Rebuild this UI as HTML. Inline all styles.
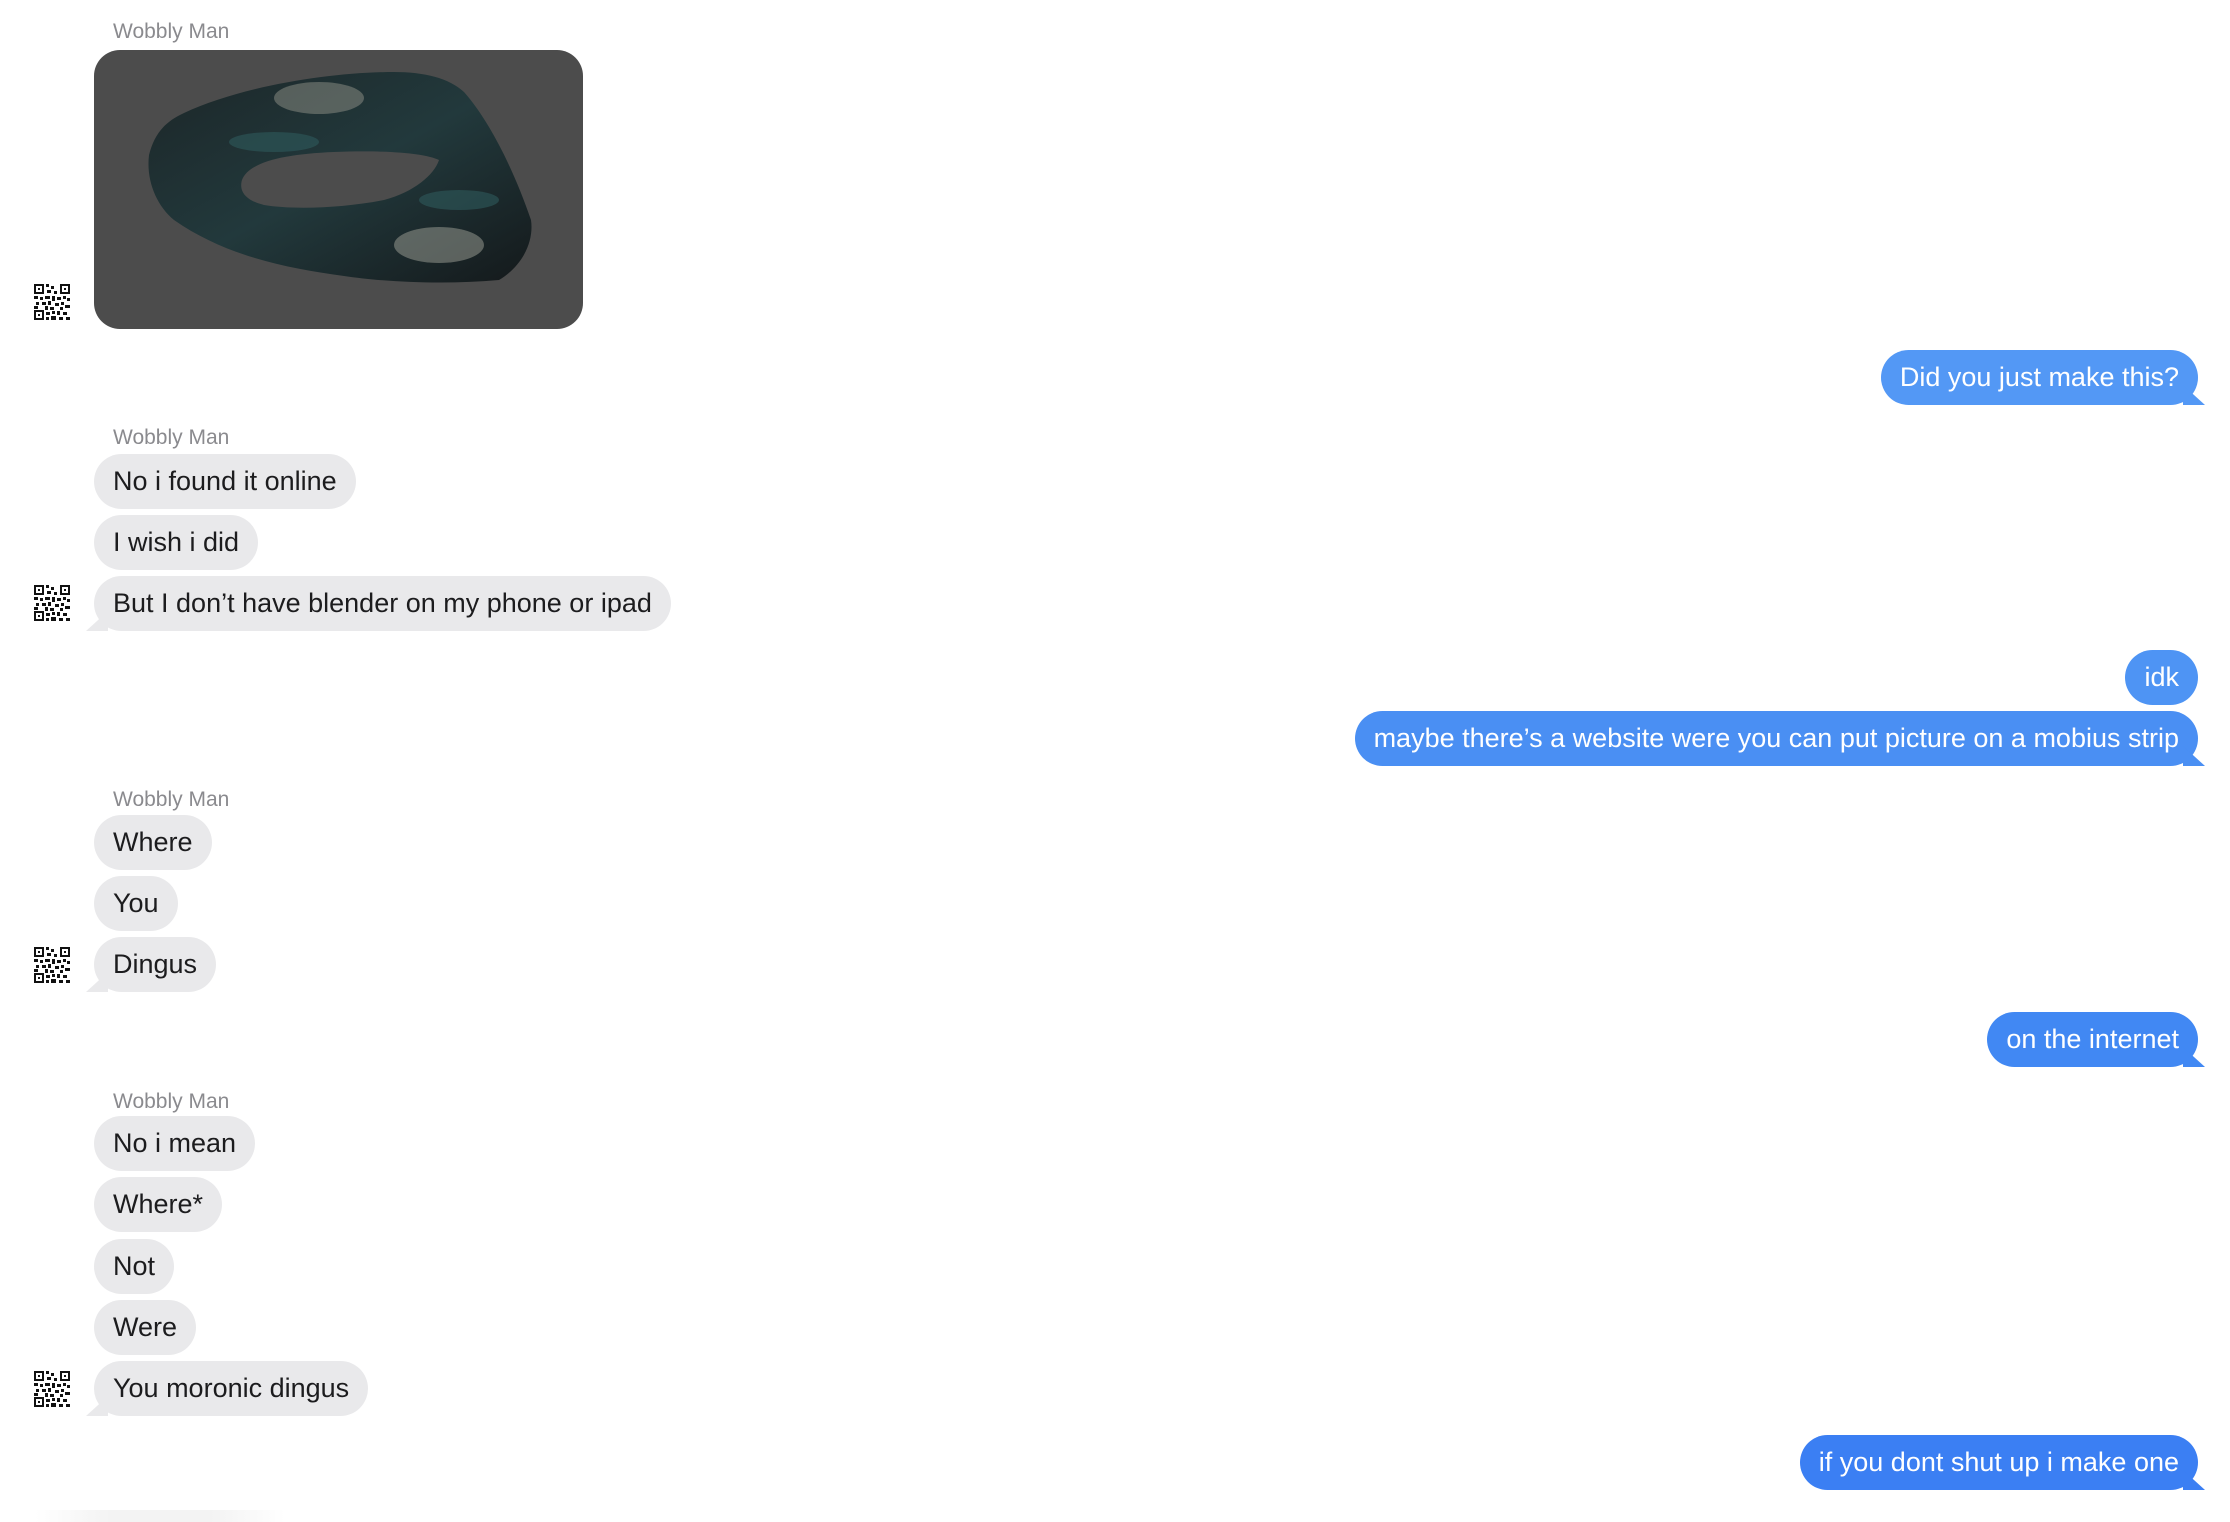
<!DOCTYPE html>
<html><head><meta charset="utf-8"><style>
html,body{margin:0;padding:0;background:#fff;width:2230px;height:1522px;overflow:hidden;position:relative;font-family:"Liberation Sans",Arial,sans-serif}
.n{position:absolute;left:113px;font-size:21px;color:#8a8a8e}
.g,.b{position:absolute;height:55px;line-height:55px;border-radius:28px;font-size:27px;padding:0 19px;white-space:nowrap;box-sizing:border-box}
.g{left:94px;background:#e9e9eb;color:#1c1c1e}
.b{right:32px;color:#fff}
.tl::before{content:"";position:absolute;left:-8px;bottom:0;width:22px;height:20px;background:#e9e9eb;clip-path:polygon(0 100%,100% 0,100% 100%)}
.tr::after{content:"";position:absolute;right:-7px;bottom:0;width:22px;height:20px;background:inherit;clip-path:polygon(100% 100%,0 0,0 100%)}
.av{position:absolute;left:33px;width:38px;height:38px}
</style></head><body>
<svg width="0" height="0" style="position:absolute"><defs><g id="qr">
<rect x="0" y="0" width="38" height="38" fill="#fff"/>
<path d="M1 1h10v10H1zM3 3v6h6V3zM27 1h10v10H27zM29 3v6h6V3zM1 27h10v10H1zM3 29v6h6v-6z" fill="#111" fill-rule="evenodd"/>
<rect x="5" y="5" width="2" height="2" fill="#111"/><rect x="31" y="5" width="2" height="2" fill="#111"/><rect x="5" y="31" width="2" height="2" fill="#111"/>
<path d="M13 1h3v3h-3zM18 3h3v3h-3zM14 7h4v3h-4zM21 8h3v3h-3zM1 13h4v3H1zM7 14h3v3H7zM12 13h5v3h-5zM19 13h3v5h-3zM24 14h4v3h-4zM30 13h3v3h-3zM34 15h3v3h-3zM3 19h3v3H3zM9 19h4v3H9zM15 18h3v4h-3zM22 20h4v3h-4zM28 19h3v3h-3zM1 23h4v3H1zM12 23h3v4h-3zM17 24h4v3h-4zM27 24h3v3h-3zM32 22h5v3h-5zM13 29h4v3h-4zM19 28h3v3h-3zM24 28h3v4h-3zM30 29h4v3h-4zM13 34h3v3h-3zM18 33h5v4h-5zM26 34h4v3h-4zM33 34h4v3h-4z" fill="#111"/>
</g></defs></svg>

<div class="n" style="top:20px">Wobbly Man</div>
<div style="position:absolute;left:94px;top:50px;width:489px;height:279px;border-radius:26px;background:#4c4c4c;overflow:hidden">
<svg width="489" height="279" viewBox="0 0 489 279">
<defs><linearGradient id="lg" x1="0" y1="0" x2="1" y2="1"><stop offset="0" stop-color="#1c2628"/><stop offset=".5" stop-color="#22393c"/><stop offset="1" stop-color="#14191b"/></linearGradient></defs>
<path d="M55 105 C60 85 70 72 90 63 C150 35 240 22 300 22 C330 22 355 28 370 42 C395 70 420 120 437 170 C440 190 430 215 405 230 C350 235 290 232 250 226 C190 218 130 205 80 170 C62 155 52 130 55 105Z M148 130 C155 112 190 104 240 102 C290 100 330 103 345 110 C340 125 320 142 290 150 C250 158 200 160 170 155 C150 150 145 140 148 130Z" fill="url(#lg)" fill-rule="evenodd"/>
<ellipse cx="225" cy="48" rx="45" ry="16" fill="#8f9188" opacity=".5"/>
<ellipse cx="345" cy="195" rx="45" ry="18" fill="#a0a298" opacity=".5"/>
<ellipse cx="180" cy="92" rx="45" ry="10" fill="#2f5a5c" opacity=".6"/>
<ellipse cx="365" cy="150" rx="40" ry="10" fill="#2f5a5c" opacity=".6"/>
</svg></div>
<svg class="av" style="top:283px"><use href="#qr"/></svg>

<div class="b tr" style="top:350px;background:#5398f5">Did you just make this?</div>

<div class="n" style="top:426px">Wobbly Man</div>
<div class="g" style="top:454px">No i found it online</div>
<div class="g" style="top:515px">I wish i did</div>
<div class="g tl" style="top:576px">But I don’t have blender on my phone or ipad</div>
<svg class="av" style="top:584px"><use href="#qr"/></svg>

<div class="b" style="top:650px;background:#4e94f4">idk</div>
<div class="b tr" style="top:711px;background:#4a8ff3">maybe there’s a website were you can put picture on a mobius strip</div>

<div class="n" style="top:788px">Wobbly Man</div>
<div class="g" style="top:815px">Where</div>
<div class="g" style="top:876px">You</div>
<div class="g tl" style="top:937px">Dingus</div>
<svg class="av" style="top:946px"><use href="#qr"/></svg>

<div class="b tr" style="top:1012px;background:#4188f3">on the internet</div>

<div class="n" style="top:1090px">Wobbly Man</div>
<div class="g" style="top:1116px">No i mean</div>
<div class="g" style="top:1177px">Where*</div>
<div class="g" style="top:1239px">Not</div>
<div class="g" style="top:1300px">Were</div>
<div class="g tl" style="top:1361px">You moronic dingus</div>
<svg class="av" style="top:1370px"><use href="#qr"/></svg>

<div class="b tr" style="top:1435px;background:#3b7ff3">if you dont shut up i make one</div>
<div style="position:absolute;left:35px;top:1510px;width:250px;height:12px;background:linear-gradient(90deg,#fff,#f3f3f3 30%,#f3f3f3 70%,#fff)"></div>
</body></html>
